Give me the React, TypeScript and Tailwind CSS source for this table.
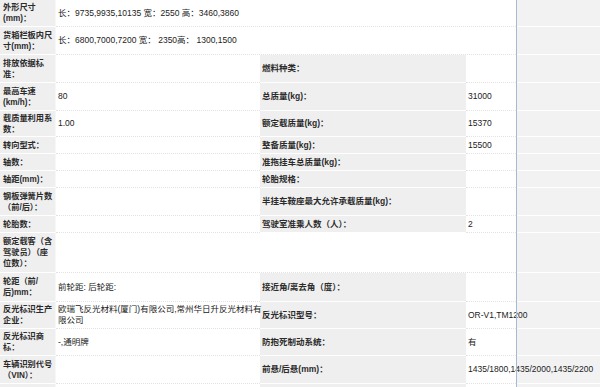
import React from "react";

/* ===============================
   TYPES
=============================== */
type Row = {
  h: number;
  label: React.ReactNode;
  value?: React.ReactNode;
  label2?: React.ReactNode;
  value2?: React.ReactNode;
  span?: boolean; // value spans across cols 2-4
};

const rows: Row[] = [
  {
    h: 27,
    label: (<>外形尺寸<br />(mm)：</>),
    value: "长：9735,9935,10135 宽：2550 高：3460,3860",
    span: true,
  },
  {
    h: 28,
    label: (<>货箱栏板内尺<br />寸(mm)：</>),
    value: "长：6800,7000,7200 宽： 2350高： 1300,1500",
    span: true,
  },
  { h: 28, label: (<>排放依据标<br />准：</>), label2: "燃料种类：" },
  { h: 28, label: (<>最高车速<br />(km/h)：</>), value: "80", label2: "总质量(kg)：", value2: "31000" },
  { h: 26, label: (<>载质量利用系<br />数：</>), value: "1.00", label2: "额定载质量(kg)：", value2: "15370" },
  { h: 17, label: "转向型式：", label2: "整备质量(kg)：", value2: "15500" },
  { h: 17, label: "轴数：", label2: "准拖挂车总质量(kg)：" },
  { h: 17, label: "轴距(mm)：", label2: "轮胎规格：" },
  { h: 28, label: (<>钢板弹簧片数<br />（前/后）：</>), label2: "半挂车鞍座最大允许承载质量(kg)：" },
  { h: 17, label: "轮胎数：", label2: "驾驶室准乘人数（人）：", value2: "2" },
  { h: 40, label: (<>额定载客（含<br />驾驶员）（座<br />位数）：</>), span: true },
  { h: 29, label: (<>轮距（前/<br />后)mm：</>), value: "前轮距: 后轮距:", label2: "接近角/离去角（度）：" },
  {
    h: 27,
    label: (<>反光标识生产<br />企业：</>),
    value: (<>欧瑞飞反光材料(厦门)有限公司,常州华日升反光材料有<br />限公司</>),
    label2: "反光标识型号：",
    value2: "OR-V1,TM1200",
  },
  { h: 27, label: (<>反光标识商<br />标：</>), value: "-,通明牌", label2: "防抱死制动系统：", value2: "有" },
  {
    h: 28,
    label: (<>车辆识别代号<br />（VIN）：</>),
    label2: "前悬/后悬(mm)：",
    value2: "1435/1800,1435/2000,1435/2200",
  },
  { h: 20, label: "" },
];

const labelCls =
  "bg-[#efefef] border-b border-white font-bold text-[#2b2b2b] align-middle whitespace-nowrap";
const valueCls =
  "bg-white border-b border-dotted border-[#e3e3e3] text-[#222] align-middle whitespace-nowrap";
const restCls = "bg-[#f2f2f2] border-b border-white";

export default function App() {
  return (
    <main
      className="relative w-[600px] h-[387px] overflow-hidden bg-white text-[8.5px] leading-[11px]"
      style={{ fontFamily: '"Liberation Sans", "Noto Sans CJK SC", sans-serif' }}
    >
      <table className="table-fixed border-separate border-spacing-0 w-[600px]">
        <colgroup>
          <col className="w-[56px]" />
          <col className="w-[204px]" />
          <col className="w-[206px]" />
          <col className="w-[50px]" />
          <col className="w-[84px]" />
        </colgroup>
        <tbody>
          {rows.map((r, i) => (
            <tr key={i} style={{ height: r.h }}>
              <td className={`${labelCls} text-[8.2px] pl-[3px] border-r border-r-[#f7f7f7]`}>{r.label}</td>
              {r.span ? (
                <td colSpan={3} className={`${valueCls} pl-[2px]`}>
                  {r.value}
                </td>
              ) : (
                <>
                  <td className={`${valueCls} pl-[2px]`}>{r.value}</td>
                  <td className={`${labelCls} pl-[2px]`}>{r.label2}</td>
                  <td className={`${valueCls} pl-[2px]`}>{r.value2}</td>
                </>
              )}
              <td className={restCls}></td>
            </tr>
          ))}
        </tbody>
      </table>

      {/* page edge guide line */}
      <div className="absolute top-0 bottom-0 left-[516px] w-px bg-[#a7bad3]" />
    </main>
  );
}
